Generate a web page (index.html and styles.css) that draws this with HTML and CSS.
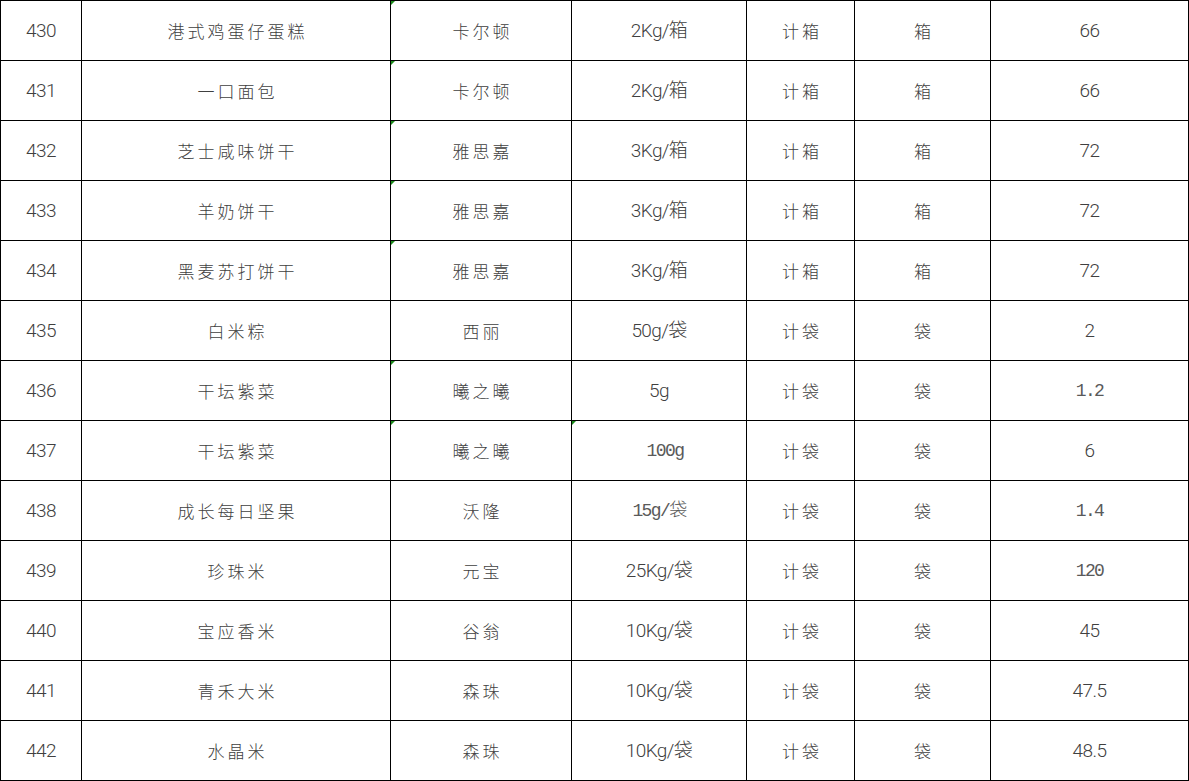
FILE: index.html
```html
<!DOCTYPE html>
<html lang="zh-CN">
<head>
<meta charset="utf-8">
<title>商品价格表</title>
<link rel="stylesheet" href="styles.css">
</head>
<body>
<table class="sheet">
  <colgroup>
    <col class="c-no"><col class="c-name"><col class="c-brand"><col class="c-spec"><col class="c-unit"><col class="c-pack"><col class="c-price">
  </colgroup>
  <tbody>
    <tr><td class="num">430</td><td class="cjk">港式鸡蛋仔蛋糕</td><td class="cjk flag">卡尔顿</td><td class="num">2Kg/箱</td><td class="cjk">计箱</td><td class="cjk">箱</td><td class="num">66</td></tr>
    <tr><td class="num">431</td><td class="cjk">一口面包</td><td class="cjk flag">卡尔顿</td><td class="num">2Kg/箱</td><td class="cjk">计箱</td><td class="cjk">箱</td><td class="num">66</td></tr>
    <tr><td class="num">432</td><td class="cjk">芝士咸味饼干</td><td class="cjk flag">雅思嘉</td><td class="num">3Kg/箱</td><td class="cjk">计箱</td><td class="cjk">箱</td><td class="num">72</td></tr>
    <tr><td class="num">433</td><td class="cjk">羊奶饼干</td><td class="cjk flag">雅思嘉</td><td class="num">3Kg/箱</td><td class="cjk">计箱</td><td class="cjk">箱</td><td class="num">72</td></tr>
    <tr><td class="num">434</td><td class="cjk">黑麦苏打饼干</td><td class="cjk flag">雅思嘉</td><td class="num">3Kg/箱</td><td class="cjk">计箱</td><td class="cjk">箱</td><td class="num">72</td></tr>
    <tr><td class="num">435</td><td class="cjk">白米粽</td><td class="cjk">西丽</td><td class="num">50g/袋</td><td class="cjk">计袋</td><td class="cjk">袋</td><td class="num">2</td></tr>
    <tr><td class="num">436</td><td class="cjk">干坛紫菜</td><td class="cjk flag">曦之曦</td><td class="num">5g</td><td class="cjk">计袋</td><td class="cjk">袋</td><td class="mono">1.2</td></tr>
    <tr><td class="num">437</td><td class="cjk">干坛紫菜</td><td class="cjk flag">曦之曦</td><td class="mono flag shift">100g</td><td class="cjk">计袋</td><td class="cjk">袋</td><td class="num">6</td></tr>
    <tr><td class="num">438</td><td class="cjk">成长每日坚果</td><td class="cjk">沃隆</td><td class="mono">15g/袋</td><td class="cjk">计袋</td><td class="cjk">袋</td><td class="mono">1.4</td></tr>
    <tr><td class="num">439</td><td class="cjk">珍珠米</td><td class="cjk">元宝</td><td class="num">25Kg/袋</td><td class="cjk">计袋</td><td class="cjk">袋</td><td class="mono">120</td></tr>
    <tr><td class="num">440</td><td class="cjk">宝应香米</td><td class="cjk">谷翁</td><td class="num">10Kg/袋</td><td class="cjk">计袋</td><td class="cjk">袋</td><td class="num">45</td></tr>
    <tr><td class="num">441</td><td class="cjk">青禾大米</td><td class="cjk">森珠</td><td class="num">10Kg/袋</td><td class="cjk">计袋</td><td class="cjk">袋</td><td class="num">47.5</td></tr>
    <tr><td class="num">442</td><td class="cjk">水晶米</td><td class="cjk">森珠</td><td class="num">10Kg/袋</td><td class="cjk">计袋</td><td class="cjk">袋</td><td class="num">48.5</td></tr>
  </tbody>
</table>
</body>
</html>
```

FILE: styles.css
```css
html, body {
  margin: 0;
  padding: 0;
  background: #ffffff;
}

.sheet {
  border-collapse: collapse;
  table-layout: fixed;
  width: 1188px;
  color: #404040;
}

.c-no { width: 81px; }
.c-name { width: 309px; }
.c-brand { width: 181px; }
.c-spec { width: 175px; }
.c-unit { width: 108px; }
.c-pack { width: 136px; }
.c-price { width: 198px; }

.sheet td {
  position: relative;
  border: 1px solid #000000;
  height: 59px;
  padding: 0;
  text-align: center;
  vertical-align: middle;
  white-space: nowrap;
  line-height: 20px;
}

.cjk {
  font-family: "Noto Sans CJK SC", sans-serif;
  font-size: 17px;
  letter-spacing: 3px;
  text-indent: 3px;
  font-weight: 300;
}

.num {
  font-family: Roboto, "Noto Sans CJK SC", sans-serif;
  font-weight: 300;
  font-size: 19px;
  letter-spacing: -0.6px;
}

.mono {
  font-family: "Liberation Mono", "Noto Sans CJK SC", monospace;
  font-size: 18px;
  letter-spacing: -1.6px;
  font-weight: 300;
  color: #5a5a5a;
}

.shift {
  text-indent: 12px;
}

.flag::before {
  content: "";
  position: absolute;
  left: 0;
  top: 0;
  width: 0;
  height: 0;
  border-top: 4px solid #1a8a1a;
  border-right: 4px solid transparent;
}
```
